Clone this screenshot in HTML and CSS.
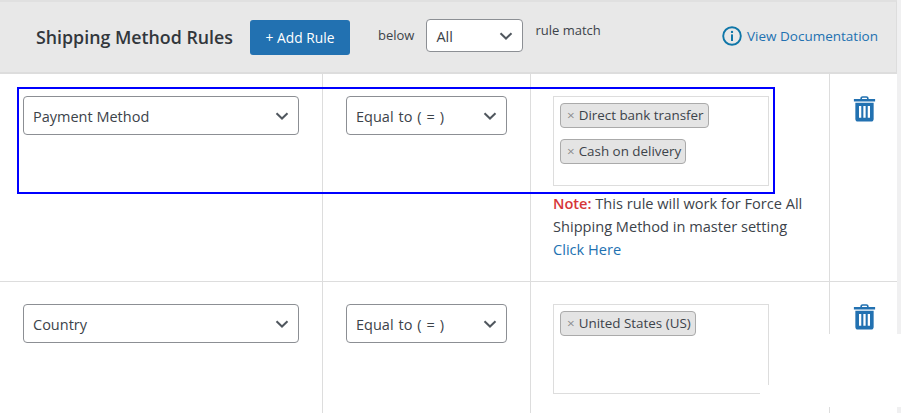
FILE: index.html
```html
<!DOCTYPE html>
<html lang="en">
<head>
  <meta charset="UTF-8" />
  <title>Shipping Method Rules</title>
  <link rel="stylesheet" href="styles.css">
</head>
<body>
  <div class="rules">
    <div class="rules-head">
      <h2>Shipping Method Rules</h2>
      <button type="button" class="button">+ Add Rule</button>
      <span class="below">below</span>
      <div class="select select-all">
        <span>All</span>
        <svg class="chevron" width="14" height="8" viewBox="0 0 14 8"><path d="M1.5 1.2 7 6.5l5.5-5.3" /></svg>
      </div>
      <span class="rule-match">rule match</span>
      <a class="docs" href="#">
        <svg width="20" height="20" viewBox="0 0 20 20">
          <circle cx="10" cy="10" r="8.8" fill="none" stroke="#0f76a8" stroke-width="1.9" />
          <circle cx="10" cy="5.9" r="1.2" fill="#0f76a8" />
          <rect x="9" y="8.4" width="2" height="6.6" fill="#0f76a8" />
        </svg>
        View Documentation
      </a>
    </div>

    <div class="rule-row rule-first">
      <div class="cell">
        <div class="select select-field">
          <span>Payment Method</span>
          <svg class="chevron" width="14" height="8" viewBox="0 0 14 8"><path d="M1.5 1.2 7 6.5l5.5-5.3" /></svg>
        </div>
      </div>
      <div class="cell">
        <div class="select select-op">
          <span>Equal to ( = )</span>
          <svg class="chevron" width="14" height="8" viewBox="0 0 14 8"><path d="M1.5 1.2 7 6.5l5.5-5.3" /></svg>
        </div>
      </div>
      <div class="cell cell-value">
        <div class="multi">
          <span class="chip"><i>×</i>Direct bank transfer</span>
          <span class="chip"><i>×</i>Cash on delivery</span>
        </div>
        <p class="note"><span class="note-label">Note:</span> This rule will work for Force All<br>Shipping Method in master setting<br><a href="#">Click Here</a></p>
      </div>
      <div class="cell cell-trash">
        <svg class="trash" width="23" height="26" viewBox="0 0 22 25"><path d="M7 3V2.4C7 1.1 8 .3 9.2.3h3.6C14 .3 15 1.1 15 2.4V3h6.2v2.2H.8V3zm1.6 0h4.8v-.6c0-.4-.2-.6-.6-.6H9.200c-.4 0-.6.2-.6.6zM2.200 6.500h17.600V22c0 1.500-1 2.500-2.500 2.500H4.700c-1.500 0-2.500-1-2.500-2.500zm3.500 3V21h2.200V9.500zm4.200 0V21h2.200V9.500zm4.200 0V21h2.200V9.500z" fill-rule="evenodd" /></svg>
      </div>
    </div>

    <div class="rule-row">
      <div class="cell">
        <div class="select select-field">
          <span>Country</span>
          <svg class="chevron" width="14" height="8" viewBox="0 0 14 8"><path d="M1.5 1.2 7 6.5l5.5-5.3" /></svg>
        </div>
      </div>
      <div class="cell">
        <div class="select select-op">
          <span>Equal to ( = )</span>
          <svg class="chevron" width="14" height="8" viewBox="0 0 14 8"><path d="M1.5 1.2 7 6.5l5.5-5.3" /></svg>
        </div>
      </div>
      <div class="cell cell-value">
        <div class="multi">
          <span class="chip"><i>×</i>United States (US)</span>
        </div>
      </div>
      <div class="cell cell-trash">
        <svg class="trash" width="23" height="26" viewBox="0 0 22 25"><path d="M7 3V2.4C7 1.1 8 .3 9.2.3h3.6C14 .3 15 1.1 15 2.4V3h6.2v2.2H.8V3zm1.6 0h4.8v-.6c0-.4-.2-.6-.6-.6H9.200c-.4 0-.6.2-.6.6zM2.200 6.500h17.600V22c0 1.500-1 2.500-2.500 2.500H4.700c-1.500 0-2.500-1-2.500-2.500zm3.500 3V21h2.200V9.500zm4.200 0V21h2.200V9.500zm4.200 0V21h2.200V9.500z" fill-rule="evenodd" /></svg>
      </div>
    </div>
  </div>

  <!-- annotation box and pasted-over patch from the screenshot -->
  <div class="highlight"></div>
  <div class="patch patch-a"></div>
  <div class="patch patch-b"></div>
</body>
</html>
```

FILE: styles.css
```css
html, body {
  height: 100%;
}
body {
  font-family: 'Open Sans', 'Noto Sans', sans-serif;
  font-size: 14.5px;
  color: #3c434a;
  background-color: #F0F0F1;
  margin: 0;
  overflow: hidden;
}
.rules {
  width: 897px;
  height: 413px;
  background-color: #FFFFFF;
  box-sizing: border-box;
  overflow: hidden;
}
.rules-head {
  display: flex;
  align-items: flex-start;
  height: 74px;
  box-sizing: border-box;
  background-color: #E8E8E8;
  border-top: 2px solid #E0E0E0;
  border-bottom: 2px solid #DDDDDD;
  border-right: 1px solid #DDDDDD;
}
h2 {
  width: 197px;
  margin: 23px 0 0 36px;
  font-size: 17.8px;
  line-height: 24px;
  font-weight: 600;
  color: #32373c;
  white-space: nowrap;
}
.button {
  width: 100px;
  height: 35px;
  margin: 18px 0 0 17px;
  padding: 0;
  cursor: pointer;
  background-color: #2271B1;
  color: #fff;
  border: none;
  border-radius: 3px;
  font-family: inherit;
  font-size: 13.8px;
}
.below {
  margin: 23px 0 0 28px;
  font-size: 13px;
  line-height: 20px;
}
.select {
  display: flex;
  justify-content: space-between;
  align-items: center;
  box-sizing: border-box;
  background-color: #fff;
  border: 1px solid #8c8f94;
  border-radius: 4px;
  padding: 1px 9px 0;
}
.select-all {
  width: 97px;
  height: 33px;
  margin: 17px 0 0 12px;
}
.select-field {
  width: 276px;
  height: 39px;
}
.select-op {
  width: 161px;
  height: 39px;
  word-spacing: 1.2px;
}
.chevron {
  fill: none;
  stroke: #50575e;
  stroke-width: 2;
}
.rule-match {
  margin: 18px 0 0 12px;
  font-size: 13px;
  line-height: 20px;
}
.docs {
  display: flex;
  align-items: center;
  gap: 5px;
  margin: 24px 0 0 auto;
  padding-right: 18px;
  height: 20px;
  font-size: 13.5px;
  color: #2271B1;
  text-decoration: none;
  white-space: nowrap;
}
.rule-row {
  display: grid;
  grid-template-columns: 323px 208px 299px 1fr;
  height: 209px;
  box-sizing: border-box;
  border-bottom: 1px solid #DDDDDD;
}
.rule-first {
  height: 208px;
}
.rule-row:last-child {
  border-bottom: none;
}
.cell {
  box-sizing: border-box;
  padding: 22px 0 0 23px;
  border-right: 1px solid #DDDDDD;
}
.cell-value {
  padding-left: 22px;
}
.cell:last-child {
  border-right: none;
}
.cell-trash {
  padding-left: 23px;
  padding-top: 23px;
}
.trash {
  display: block;
  margin-top: -1px;
  fill: #2271B1;
}
.multi {
  display: flex;
  flex-direction: column;
  align-items: flex-start;
  gap: 11px;
  width: 216px;
  height: 90px;
  box-sizing: border-box;
  padding: 6px;
  border: 1px solid #DDDDDD;
}
.chip {
  display: block;
  height: 25px;
  line-height: 23px;
  box-sizing: border-box;
  padding: 0 4px 0 6px;
  background-color: #E4E4E4;
  border: 1px solid #AAAAAA;
  border-radius: 4px;
  font-size: 13.4px;
  white-space: nowrap;
}
.chip i {
  font-style: normal;
  color: #888;
  margin-right: 4px;
}
.note {
  width: 270px;
  margin: 6px 0 0;
  line-height: 23px;
  font-size: 14.6px;
}
.note-label {
  color: #D63638;
  font-weight: 600;
}
.note a {
  color: #2271B1;
  text-decoration: none;
}
.highlight {
  position: absolute;
  left: 17px;
  top: 87px;
  width: 754px;
  height: 103px;
  border: 2px solid #0000FF;
}
.patch {
  position: absolute;
  background-color: #FFFFFF;
}
.patch-a {
  left: 769px;
  top: 334px;
  width: 132px;
  height: 73px;
}
.patch-b {
  left: 760px;
  top: 385px;
  width: 141px;
  height: 22px;
}
```
